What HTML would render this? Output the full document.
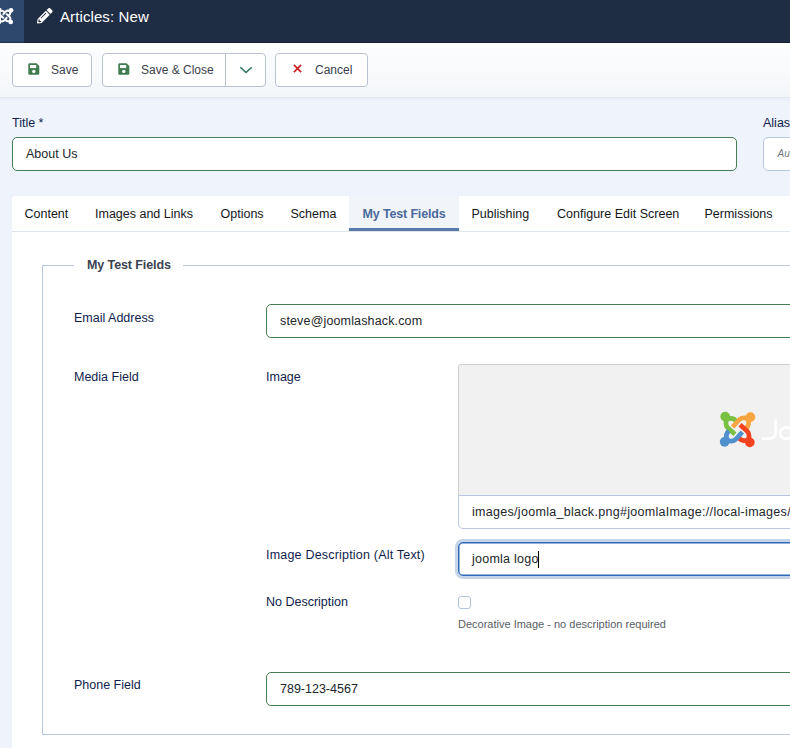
<!DOCTYPE html>
<html><head><meta charset="utf-8">
<style>
*{box-sizing:border-box;margin:0;padding:0}
html,body{width:790px;height:748px;overflow:hidden}
body{font-family:"Liberation Sans",sans-serif;background:#eef3fc;position:relative;color:#1f2f4f}
.abs{position:absolute}
#hdr{left:0;top:0;width:790px;height:43px;background:#1f2d44}
#logo{left:0;top:0;width:24px;height:43px;background:#2d486c}
#hline{left:0;top:42px;width:790px;height:1px;background:rgba(5,15,35,.35)}
#title{left:60px;top:8px;font-size:15px;letter-spacing:0.1px;color:#fff;line-height:18px}
#tb{left:0;top:43px;width:790px;height:55px;background:linear-gradient(#fdfefe,#f3f6f9);border-bottom:1px solid #e2e8f2}
#tbsh{left:0;top:98px;width:790px;height:4px;background:linear-gradient(#e8edf7,#eef3fc)}
.btn{position:absolute;top:53px;height:34px;background:#fff;border:1px solid #b9c2d2;border-radius:4px;font-size:12px;color:#3a404b}
.btn span{position:absolute;top:9px;line-height:14px}
.lbl{position:absolute;font-size:12.5px;line-height:15px;color:#101d4e;margin-top:1px}
.inp{position:absolute;height:34px;background:#fff;border:1px solid #457d54;border-radius:5px;font-size:12.5px;color:#22262a}
.inp span{position:absolute;left:13px;top:9px;line-height:15px;white-space:nowrap}
#tabs{left:12px;top:196px;width:800px;height:36px;background:#fff;border-radius:4px 0 0 0;border-bottom:1px solid #dfe5ef}
.tab{position:absolute;top:11px;font-size:12.5px;line-height:15px;color:#141619;white-space:nowrap}
#panel{left:12px;top:232px;width:800px;height:520px;background:#fff}
</style></head><body>
<div id="hdr" class="abs"></div>
<div id="logo" class="abs">
<svg width="20" height="20" viewBox="0 0 748 748" style="position:absolute;left:-5px;top:6px">
<g fill="#fff" stroke="#fff"><circle cx="160" cy="150" r="88"/><path d="M 350,225 C 315,185 260,170 210,190 C 160,215 162,300 205,345 L 330,458" fill="none" stroke-width="76"/><g transform="rotate(90 374 374)"><circle cx="160" cy="150" r="88"/><path d="M 350,225 C 315,185 260,170 210,190 C 160,215 162,300 205,345 L 330,458" fill="none" stroke-width="76"/></g><g transform="rotate(180 374 374)"><circle cx="160" cy="150" r="88"/><path d="M 350,225 C 315,185 260,170 210,190 C 160,215 162,300 205,345 L 330,458" fill="none" stroke-width="76"/></g><g transform="rotate(270 374 374)"><circle cx="160" cy="150" r="88"/><path d="M 350,225 C 315,185 260,170 210,190 C 160,215 162,300 205,345 L 330,458" fill="none" stroke-width="76"/></g></g></svg>
</div>
<svg class="abs" style="left:37.2px;top:8.2px" width="15.6" height="15.6" viewBox="0 0 512 512"><path fill="#fff" d="M497.9 142.1l-46.1 46.1c-4.7 4.7-12.3 4.7-17 0l-111-111c-4.7-4.7-4.7-12.3 0-17l46.1-46.1c18.7-18.7 49.1-18.7 67.9 0l60.1 60.1c18.8 18.7 18.8 49.1 0 67.9zM284.2 99.8L21.6 362.4.4 483.9c-2.9 16.4 11.4 30.6 27.8 27.8l121.5-21.3 262.6-262.6c4.7-4.7 4.7-12.3 0-17l-111-111c-4.8-4.7-12.4-4.7-17.1 0zM124.1 339.9c-5.5-5.5-5.5-14.3 0-19.8l154-154c5.5-5.5 14.3-5.5 19.8 0s5.5 14.3 0 19.8l-154 154c-5.5 5.5-14.3 5.5-19.8 0zM88 424h48v36.3l-64.5 11.3-31.1-31.1L51.7 376H88v48z"/></svg>
<div id="title" class="abs">Articles: New</div>
<div id="hline" class="abs"></div>

<div id="tb" class="abs"></div>
<div id="tbsh" class="abs"></div>
<div class="btn" style="left:12px;width:80px">
 <svg style="position:absolute;left:14.5px;top:9px" width="12" height="12" viewBox="0 0 12 12"><path d="M1.5 0.2 H8.6 L11.3 2.9 V10.6 Q11.3 11.8 10.1 11.8 H1.5 Q0.3 11.8 0.3 10.6 V1.4 Q0.3 0.2 1.5 0.2Z" fill="#417b50"/><rect x="2" y="2" width="6.2" height="3.1" fill="#fff"/><circle cx="5.8" cy="8.4" r="1.7" fill="#fff"/></svg>
 <span style="left:38px">Save</span></div>
<div class="btn" style="left:102px;width:164px">
 <svg style="position:absolute;left:14.5px;top:9px" width="12" height="12" viewBox="0 0 12 12"><path d="M1.5 0.2 H8.6 L11.3 2.9 V10.6 Q11.3 11.8 10.1 11.8 H1.5 Q0.3 11.8 0.3 10.6 V1.4 Q0.3 0.2 1.5 0.2Z" fill="#417b50"/><rect x="2" y="2" width="6.2" height="3.1" fill="#fff"/><circle cx="5.8" cy="8.4" r="1.7" fill="#fff"/></svg>
 <span style="left:38px">Save &amp; Close</span>
 <div style="position:absolute;left:122px;top:0;width:1px;height:32px;background:#b9c2d2"></div>
 <svg style="position:absolute;left:136px;top:12px" width="14" height="8" viewBox="0 0 14 8"><path d="M1.3 1.3 L7 6.6 L12.7 1.3" fill="none" stroke="#2b705b" stroke-width="1.5"/></svg>
</div>
<div class="btn" style="left:275px;width:93px">
 <svg style="position:absolute;left:16.5px;top:10px" width="9" height="9" viewBox="0 0 9 9"><path d="M0.9 0.9 L8.1 8.1 M8.1 0.9 L0.9 8.1" stroke="#cc2424" stroke-width="1.7"/></svg>
 <span style="left:39px">Cancel</span></div>

<div class="lbl" style="left:12px;top:115px">Title *</div>
<div class="inp" style="left:12px;top:137px;width:725px"><span>About Us</span></div>
<div class="lbl" style="left:763px;top:115px">Alias</div>
<div class="inp" style="left:763px;top:137px;width:60px;border-color:#b8c6de"><span style="font-style:italic;font-size:10px;color:#767b84;top:7.5px;left:13.5px">Auto-generate from title</span></div>

<div id="tabs" class="abs">
 <div class="tab" style="left:12.5px">Content</div>
 <div class="tab" style="left:83px">Images and Links</div>
 <div class="tab" style="left:208.5px">Options</div>
 <div class="tab" style="left:278.5px">Schema</div>
 <div style="position:absolute;left:337px;top:0;width:110px;height:35px;background:#f1f5fa;border-bottom:3px solid #5a7aa7"></div>
 <div class="tab" style="left:350.5px;font-weight:bold;color:#4a6a9b;letter-spacing:-0.15px">My Test Fields</div>
 <div class="tab" style="left:459.5px">Publishing</div>
 <div class="tab" style="left:545px">Configure Edit Screen</div>
 <div class="tab" style="left:692.5px">Permissions</div>
</div>
<div id="panel" class="abs"></div>

<!-- fieldset -->
<div class="abs" style="left:42px;top:265px;width:800px;height:470px;border:1px solid #b9c7de;border-right:none"></div>
<div class="abs" style="left:74px;top:258px;width:109px;height:14px;background:#fff"></div>
<div class="abs" style="left:87px;top:258px;font-size:12.5px;font-weight:bold;color:#3c4350;line-height:15px;letter-spacing:-0.1px">My Test Fields</div>

<div class="lbl" style="left:74px;top:310px">Email Address</div>
<div class="inp" style="left:266px;top:304px;width:600px"><span style="letter-spacing:0.15px">steve@joomlashack.com</span></div>

<div class="lbl" style="left:74px;top:369px">Media Field</div>
<div class="lbl" style="left:266px;top:369px">Image</div>
<div class="abs" style="left:458px;top:364px;width:400px;height:132px;background:#f1f1f1;border:1px solid #cfcfcf;border-radius:3px 0 0 0;overflow:hidden">
<svg style="position:absolute;left:256.8px;top:43.4px" width="43" height="43" viewBox="0 0 748 748">
<g fill="#7ac143" stroke="#7ac143"><circle cx="160" cy="150" r="84"/><path d="M 350,225 C 315,185 260,170 210,190 C 160,215 162,300 205,345 L 330,458" fill="none" stroke-width="82"/></g>
<g fill="#f9a541" stroke="#f9a541"><g transform="rotate(90 374 374)"><circle cx="160" cy="150" r="84"/><path d="M 350,225 C 315,185 260,170 210,190 C 160,215 162,300 205,345 L 330,458" fill="none" stroke-width="82"/></g></g>
<g fill="#f44321" stroke="#f44321"><g transform="rotate(180 374 374)"><circle cx="160" cy="150" r="84"/><path d="M 350,225 C 315,185 260,170 210,190 C 160,215 162,300 205,345 L 330,458" fill="none" stroke-width="82"/></g></g>
<g fill="#5091cd" stroke="#5091cd"><g transform="rotate(270 374 374)"><circle cx="160" cy="150" r="84"/><path d="M 350,225 C 315,185 260,170 210,190 C 160,215 162,300 205,345 L 330,458" fill="none" stroke-width="82"/></g></g></svg>
<svg style="position:absolute;left:300px;top:52px" width="40" height="30" viewBox="0 0 40 30"><g fill="none" stroke="#fff" stroke-width="2.6"><path d="M16.6 2.6 V15 Q16.6 21.7 10 21.7 H3"/><circle cx="27" cy="16" r="5.8"/></g></svg>
</div>
<div class="inp" style="left:458px;top:495px;width:400px;height:34px;border-color:#b9c6e0;border-radius:0 0 0 5px"><span style="letter-spacing:0.3px">images/joomla_black.png#joomlaImage://local-images/joomla_black.png</span></div>

<div class="lbl" style="left:266px;top:547px;letter-spacing:0.2px">Image Description (Alt Text)</div>
<div class="inp" style="left:458px;top:542px;width:400px;border-color:#2f6ab7;box-shadow:0 0 0 3px #c6d5ea, inset 0 0 0 0.5px #2f6ab7"><span style="letter-spacing:0.25px">joomla logo</span><div style="position:absolute;left:79px;top:8px;width:1px;height:17px;background:#000"></div></div>

<div class="lbl" style="left:266px;top:594px">No Description</div>
<div class="abs" style="left:458px;top:596px;width:13px;height:13px;border:1px solid #b4c4de;border-radius:3px;background:#fff"></div>
<div class="abs" style="left:458px;top:618px;font-size:11px;line-height:13px;color:#585e66">Decorative Image - no description required</div>

<div class="lbl" style="left:74px;top:677px">Phone Field</div>
<div class="inp" style="left:266px;top:672px;width:600px"><span>789-123-4567</span></div>
</body></html>
